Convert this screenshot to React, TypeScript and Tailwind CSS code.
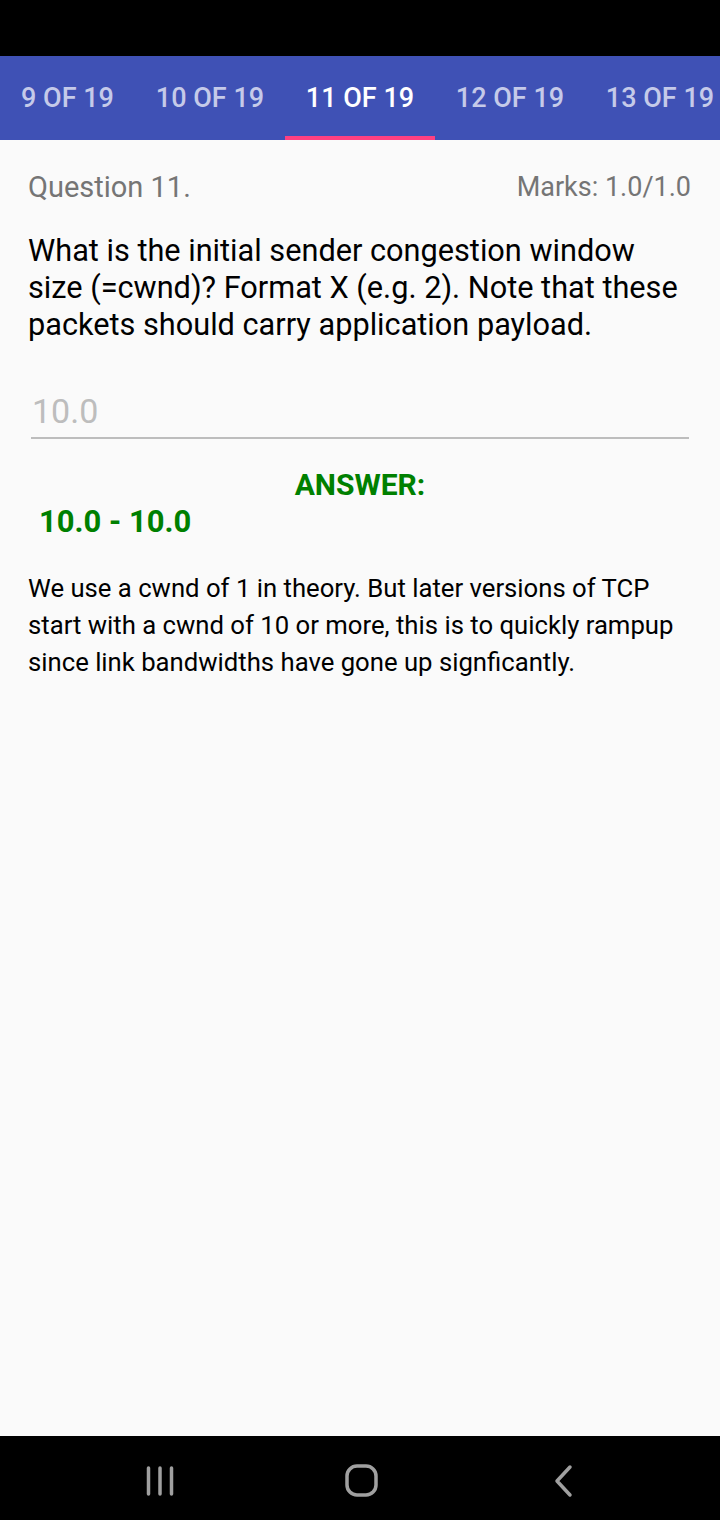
import React from "react";

const tabs = ["9 OF 19", "10 OF 19", "11 OF 19", "12 OF 19", "13 OF 19"];

export default function App() {
  return (
    <div className="w-[720px] h-[1520px] flex flex-col bg-[#fafafa] overflow-hidden" style={{ fontFamily: "Roboto, 'Noto Sans', sans-serif" }}>
      <div className="h-[56px] bg-black shrink-0" />
      <div className="h-[84px] bg-[#3f51b5] flex shrink-0 overflow-hidden">
        {tabs.map((t, i) => (
          <div
            key={t}
            className={`${i === 0 ? "w-[135px]" : "w-[150px]"} shrink-0 flex flex-col`}
          >
            <div className={`flex-1 flex items-center justify-center pt-[4px] text-[27px] font-medium ${i === 2 ? "text-white" : "text-[#c5cae9]"}`}>
              {t}
            </div>
            <div className={`h-[4px] ${i === 2 ? "bg-[#ff4081]" : ""}`} />
          </div>
        ))}
      </div>

      <div className="flex-1 px-[28px] pt-[28px]">
        <div className="flex justify-between items-center text-[#757575] text-[29px] leading-[38px]">
          <span>Question 11.</span>
          <span className="text-[27px] pr-[1px]">Marks: 1.0/1.0</span>
        </div>
        <p className="mt-[26px] text-[30.7px] leading-[37px] text-black">
          What is the initial sender congestion window size (=cwnd)? Format X (e.g. 2). Note that these packets should carry application payload.
        </p>
        <div className="mt-[48px] mx-[3px] border-b-2 border-[#bdbdbd] pb-[6px]">
          <div className="text-[34px] leading-[40px] text-[#bdbdbd] pl-[1px]">10.0</div>
        </div>
        <div className="mt-[29px] text-center text-[30px] font-bold leading-[34px] text-[#008000]">ANSWER:</div>
        <div className="mt-[2px] pl-[11px] text-[31px] font-bold leading-[36px] text-[#008000]">10.0 - 10.0</div>
        <p className="mt-[30px] text-[25.7px] leading-[37px] text-black">
          We use a cwnd of 1 in theory. But later versions of TCP start with a cwnd of 10 or more, this is to quickly rampup since link bandwidths have gone up signficantly.
        </p>
      </div>

      <div className="h-[84px] bg-black shrink-0 flex items-center pt-[6px] pl-[140px] gap-[161px]">
        <svg width="40" height="40" viewBox="0 0 40 40">
          <g stroke="#a0a0a0" strokeWidth="3.5" strokeLinecap="round">
            <line x1="8.5" y1="7" x2="8.5" y2="33" />
            <line x1="20" y1="7" x2="20" y2="33" />
            <line x1="31.5" y1="7" x2="31.5" y2="33" />
          </g>
        </svg>
        <svg width="40" height="40" viewBox="0 0 40 40">
          <rect x="6" y="5" width="29" height="29" rx="10" fill="none" stroke="#a0a0a0" strokeWidth="3.5" />
        </svg>
        <svg width="40" height="40" viewBox="0 0 40 40">
          <polyline points="28,6 15,20 28,34" fill="none" stroke="#a0a0a0" strokeWidth="3.5" strokeLinecap="round" strokeLinejoin="round" />
        </svg>
      </div>
    </div>
  );
}
